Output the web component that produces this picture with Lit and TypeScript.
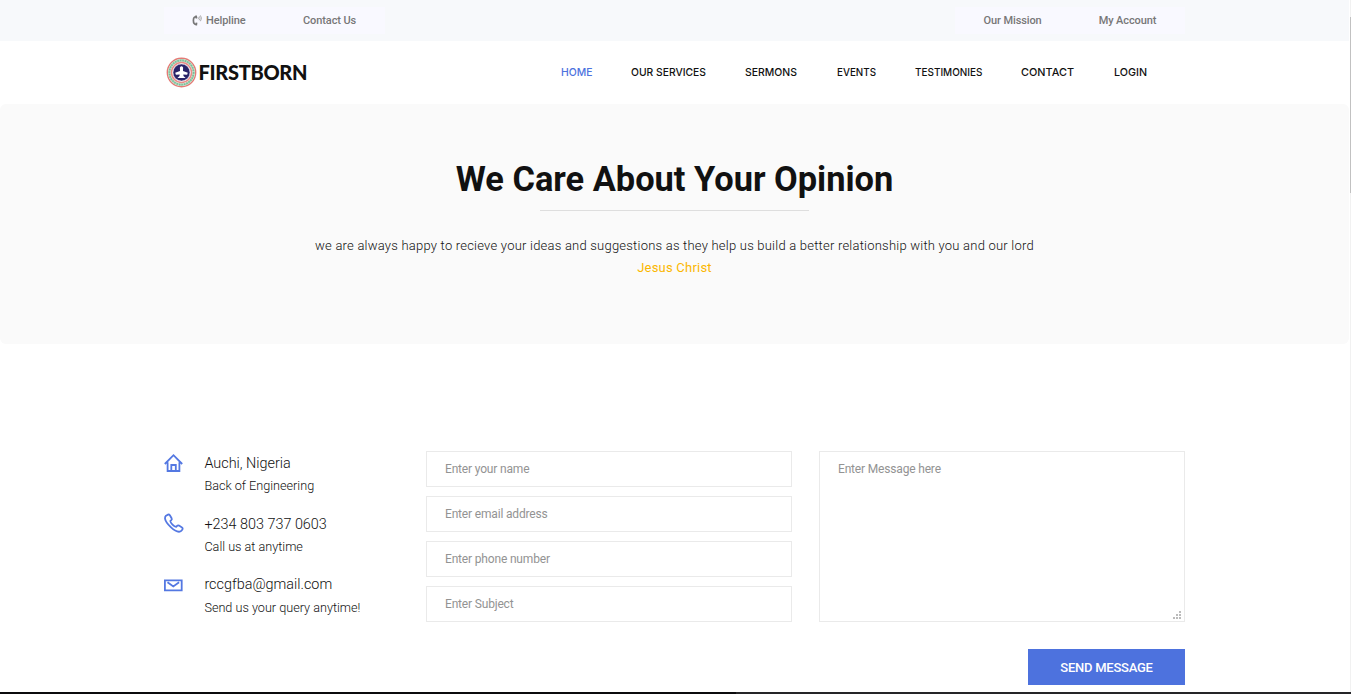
import { LitElement, html, css, svg } from "lit";
import { customElement } from "lit/decorators.js";

const NAV = [
  ["HOME", 31.5],
  ["OUR SERVICES", 75],
  ["SERMONS", 52],
  ["EVENTS", 39],
  ["TESTIMONIES", 67.5],
  ["CONTACT", 53],
  ["LOGIN", 33],
] as const;

const home = svg`<path d="M.8 10 9.500 1.200 18.200 10M3.600 8.300v8.700h11.800V8.300M7.300 17v-6h4.500v6"/>`;
const phone = svg`<path transform="translate(0 -.9)" d="M2 1.600 4 .5q1.100-.4 1.900.6l1.700 3q.6 1.100-.3 1.900l-1 .9q.2 1.600 2.200 3.600t3.700 2.300l.9-1q.8-.9 1.900-.3l3 1.800q1.100.7.500 1.900-1 1.900-2.700 2.400-3.800.6-9-4.500T1 4.500Q.9 2.700 2 1.600Z"/>`;
const mail = svg`<path d="M.9 5.400h16.800v10H.9ZM3.500 7.200l5.800 4.300 5.800-4.300"/>`;

const CONTACTS = [
  { icon: home, title: "Auchi, Nigeria", note: "Back of Engineering" },
  { icon: phone, title: "+234 803 737 0603", note: "Call us at anytime" },
  { icon: mail, title: "rccgfba@gmail.com", note: "Send us your query anytime!" },
];

@customElement("app-root")
export class AppRoot extends LitElement {
  static styles = css`
    :host {
      display: block;
      position: relative;
      height: 694px;
      overflow: hidden;
      background: #fff;
      color: #111;
      font-family: Roboto, sans-serif;
    }
    * { box-sizing: border-box; }
    .page { width: 1349px; height: 692px; overflow: hidden; }
    .wrap { width: 1021px; margin-left: 164px; }
    .top { height: 41px; background: #f7f9fb; padding-top: 7px; }
    .top .wrap { display: flex; justify-content: space-between; }
    .group {
      display: flex; align-items: center; height: 27px;
      background: #f9f9ff; color: #777;
      font-size: 11px; font-weight: 500; white-space: nowrap; letter-spacing: -0.1px;
    }
    .left { width: 221px; padding-left: 28px; }
    .right { width: 230px; padding-left: 28.500px; }
    .handset { width: 10px; height: 11px; margin-right: 4px; }
    .left .second { margin-left: 57.500px; }
    .right .second { margin-left: 57px; }
    .head { height: 63px; display: flex; align-items: center; }
    .brand { display: flex; align-items: center; margin-left: 2px; width: 394.500px; }
    .seal { width: 31px; height: 31px; flex: none; }
    .name {
      font: 900 20px/30px Lato, sans-serif; color: #111; margin-left: 1.500px;
      letter-spacing: -0.3px; padding-bottom: 1px;
    }
    nav { display: flex; gap: 39.200px; }
    nav svg { height: 20px; display: block; overflow: visible; }
    nav text { font: 500 11px Inter, sans-serif; fill: #111; }
    nav .active { fill: #4d72de; }
    .hero {
      height: 240px; background: #fafafa; border-radius: 6px; padding-top: 54px;
      text-align: center;
    }
    h1 { margin: 0; font-size: 34.400px; line-height: 43px; font-weight: 700; color: #111; height: 43px; }
    .rule { width: 269px; height: 1px; margin: 9px auto 0; background: #dedede; }
    .lead { margin: 24px 0 0; font-size: 13px; line-height: 22px; font-weight: 300; letter-spacing: 0.22px; }
    .lead span { display: block; color: #fab700; font-weight: 400; }
    .contact { display: grid; grid-template-columns: 262px 366px 393px; margin-top: 107px; height: 171px; }
    .info { display: flex; flex-direction: column; }
    .entry { display: grid; grid-template-columns: 40.400px 1fr; height: 60.500px; flex: none; }
    .entry svg { width: 19px; height: 19px; margin-top: 3px; fill: none; stroke: #5478e2; stroke-width: 1.800; overflow: visible; }
    h3 { margin: 0; font-size: 14.400px; line-height: 23px; font-weight: 300; padding-top: 1px; height: 24px; }
    .entry p { margin: 0; font-size: 12.650px; line-height: 21px; font-weight: 300; }
    .entry:last-child p { padding-top: 1px; }
    .fields { display: grid; row-gap: 9px; align-content: start; }
    input, textarea {
      display: block; width: 366px; border: 1px solid #eaeaea; border-radius: 0; outline: 0;
      background: #fff; font: 400 12px/18px Roboto, sans-serif; padding: 0 18px; margin: 0;
      letter-spacing: -0.17px;
    }
    input { height: 36px; }
    textarea { height: 171px; resize: none; padding-top: 8px; }
    ::placeholder { color: #939393; opacity: 1; }
    .message { margin-left: 27px; position: relative; width: 366px; height: 171px; }
    .grip { position: absolute; right: 4px; bottom: 3px; width: 8px; height: 8px; fill: #bbb; shape-rendering: crispEdges; }
    .actions { display: flex; justify-content: flex-end; margin-top: 27px; }
    button {
      width: 157px; height: 36px; border: 0; padding: 0; background: #4d72de; color: #fff;
      font: 500 13px Roboto, sans-serif; letter-spacing: -0.25px;
    }
    .track { position: absolute; right: 0; top: 0; width: 1px; height: 692px; background: #f1f1f1; padding-top: 17px; }
    .thumb { height: 176px; background: #c1c1c1; }
    .foot { height: 2px; background: linear-gradient(90deg, #0b0b0d 736px, #252528 736px); }
  `;

  private seal() {
    return html`<svg class="seal" viewBox="0 0 31 31" fill="none">
      <circle cx="15.500" cy="15.500" r="14.200" stroke="#e47a75" stroke-width="1.400" />
      <circle cx="15.500" cy="15.500" r="12.100" stroke="#b4dac2" stroke-width="2.600" />
      <circle cx="15.500" cy="15.500" r="12.100" stroke="#7bbd98" stroke-width="1.700" stroke-dasharray="1.500 1" />
      <circle cx="15.500" cy="15.500" r="10" stroke="#ea8b86" stroke-width="1.500" />
      <circle cx="15.500" cy="15.500" r="8.500" fill="#292368" stroke="#d9d5e6" stroke-width=".6" />
      <path fill="#fff" d="M13.900 10.400q1.600-2.400 3.200 0l-.1 3.500 4.800 1.900-.7 2-3.800-.3.200 1.600 2.100 1.900h-8.200l2.100-1.900.2-1.600-3.800.3-.7-2 4.800-1.900Z" />
    </svg>`;
  }

  render() {
    return html`
      <div class="page">
        <div class="top"><div class="wrap">
          <div class="group left">
            <svg class="handset" viewBox="0 0 10 11">
              <path fill="none" stroke="#777" stroke-width="1.700" d="M4.300 1.800Q1.400 1.500 1.400 5.500T4.500 9.400" />
              <path fill="#777" d="M3.200.6 4.900.4l.5 2.800-1.700.5ZM3.700 7.400l1.700.4-.3 2.700-1.800-.2Z" />
              <path fill="none" stroke="#999" stroke-width=".8" d="M6.200 2.300q.8.900 0 2M7.300 1.300q1.500 2 0 4M8.400.4q2.200 2.900 0 5.800" />
            </svg>
            <span>Helpline</span><span class="second">Contact Us</span>
          </div>
          <div class="group right"><span>Our Mission</span><span class="second">My Account</span></div>
        </div></div>
        <header class="head wrap">
          <div class="brand">${this.seal()}<span class="name">FIRSTBORN</span></div>
          <nav>
            ${NAV.map(([label, w], i) => html`<svg width=${w} height="20">
              <text class=${i ? "" : "active"} x="0" y="13" textLength=${w} lengthAdjust="spacingAndGlyphs">${label}</text>
            </svg>`)}
          </nav>
        </header>
        <section class="hero">
          <h1>We Care About Your Opinion</h1>
          <div class="rule"></div>
          <p class="lead">we are always happy to recieve your ideas and suggestions as they help us build a better relationship with you and our lord<span>Jesus Christ</span></p>
        </section>
        <section class="contact wrap">
          <div class="info">
            ${CONTACTS.map((c) => html`<div class="entry">
              <svg viewBox="0 0 19 19">${c.icon}</svg>
              <div><h3>${c.title}</h3><p>${c.note}</p></div>
            </div>`)}
          </div>
          <div class="fields">
            <input placeholder="Enter your name" />
            <input placeholder="Enter email address" />
            <input placeholder="Enter phone number" />
            <input placeholder="Enter Subject" />
          </div>
          <div class="message">
            <textarea placeholder="Enter Message here"></textarea>
            <svg class="grip" viewBox="0 0 8 8"><path d="M6 0h2v2H6ZM3 3h2v2H3ZM6 3h2v2H6ZM0 6h2v2H0ZM3 6h2v2H3ZM6 6h2v2H6Z" /></svg>
          </div>
        </section>
        <div class="actions wrap"><button>SEND MESSAGE</button></div>
      </div>
      <div class="foot"></div>
      <div class="track"><div class="thumb"></div></div>
    `;
  }
}
